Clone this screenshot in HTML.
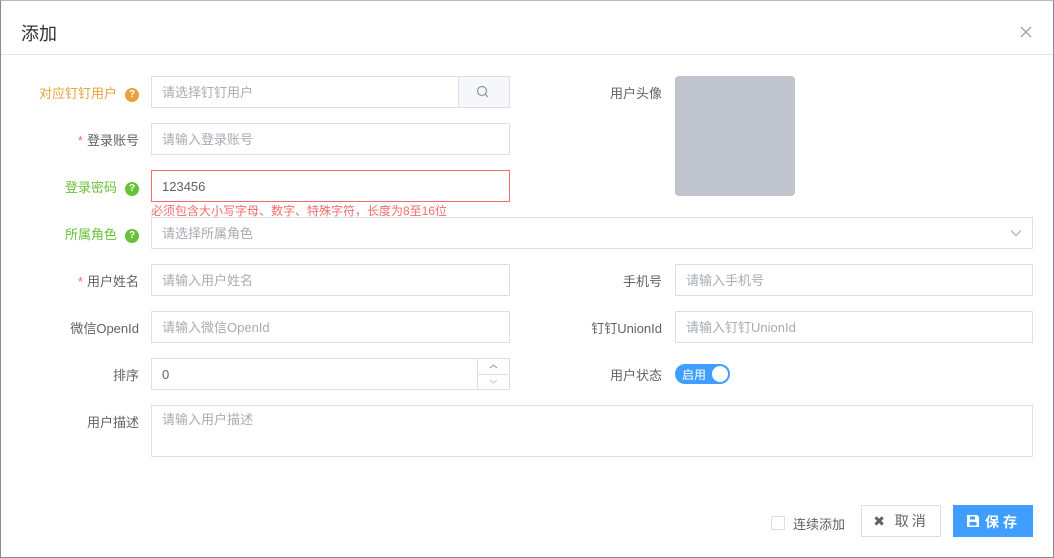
<!DOCTYPE html>
<html><head><meta charset="utf-8"><style>
*{box-sizing:border-box;margin:0;padding:0}
body{width:1054px;height:558px;background:#fff;font-family:"Liberation Sans","Noto Sans CJK SC",sans-serif;font-size:13px;color:#606266;position:relative;overflow:hidden}
.frame{position:absolute;left:0;top:0;width:1054px;height:558px;border:1px solid #8a8a8a;border-top:1px solid #bbb}
.hd{position:absolute;left:1px;top:1px;right:1px;height:54px;border-bottom:1px solid #e4e6eb}
.hd span{position:absolute;left:20px;top:19px;font-size:18px;color:#303133}
.lbl{position:absolute;text-align:right;white-space:nowrap;font-size:13px;color:#606266}
.in{position:absolute;height:32px;border:1px solid #dcdfe6;background:#fff;padding-left:10px;line-height:31px;color:#a8abb2;font-size:13px}
.q{display:inline-block;width:14px;height:14px;border-radius:50%;color:#fff;font-size:10px;line-height:14px;text-align:center;font-weight:bold;margin-left:8px;vertical-align:1px}
.star{color:#f56c6c;margin-right:4px}
</style></head><body>
<div class="frame"></div>
<div class="hd"><span>添加</span></div>
<svg width="12" height="12" style="position:absolute;left:1020px;top:26px" viewBox="0 0 12 12"><path d="M1 1L11 11M11 1L1 11" stroke="#909399" stroke-width="1.2"/></svg>

<div class="lbl" style="right:915px;top:83px;color:#e6a23c">对应钉钉用户<span class="q" style="background:#e6a23c">?</span></div>
<div class="in" style="left:151px;top:76px;width:359px">请选择钉钉用户</div>
<div style="position:absolute;left:458px;top:76px;width:52px;height:32px;background:#f5f7fa;border:1px solid #dcdfe6"><svg width="14" height="14" style="position:absolute;left:17px;top:8px" viewBox="0 0 14 14"><circle cx="6" cy="6" r="4.5" fill="none" stroke="#909399" stroke-width="1.2"/><line x1="9.3" y1="9.3" x2="12" y2="12" stroke="#909399" stroke-width="1.2"/></svg></div>

<div class="lbl" style="right:915px;top:130px"><span class="star">*</span>登录账号</div>
<div class="in" style="left:151px;top:123px;width:359px">请输入登录账号</div>

<div class="lbl" style="right:915px;top:177px;color:#67c23a">登录密码<span class="q" style="background:#67c23a">?</span></div>
<div class="in" style="left:151px;top:170px;width:359px;border-color:#f56c6c;color:#606266">123456</div>
<div style="position:absolute;left:151px;top:202px;font-size:12px;color:#f56c6c">必须包含大小写字母、数字、特殊字符，长度为8至16位</div>

<div class="lbl" style="right:915px;top:224px;color:#67c23a">所属角色<span class="q" style="background:#67c23a">?</span></div>
<div class="in" style="left:151px;top:217px;width:882px">请选择所属角色</div>
<svg width="12" height="8" style="position:absolute;left:1010px;top:229px" viewBox="0 0 12 8"><path d="M1 1.5l5 5 5-5" fill="none" stroke="#a8abb2" stroke-width="1.2"/></svg>

<div class="lbl" style="right:915px;top:271px"><span class="star">*</span>用户姓名</div>
<div class="in" style="left:151px;top:264px;width:359px">请输入用户姓名</div>
<div class="lbl" style="right:915px;top:318px">微信OpenId</div>
<div class="in" style="left:151px;top:311px;width:359px">请输入微信OpenId</div>
<div class="lbl" style="right:915px;top:365px">排序</div>
<div class="in" style="left:151px;top:358px;width:359px;color:#606266">0</div>
<div style="position:absolute;left:477px;top:358px;width:33px;height:32px;border:1px solid #dcdfe6;background:#fff"><svg width="31" height="30" viewBox="0 0 31 30" style="position:absolute;left:0;top:0"><line x1="0" y1="15.5" x2="31" y2="15.5" stroke="#dcdfe6"/><path d="M12 9l3.5-3 3.5 3" fill="none" stroke="#909399"/><path d="M12 21l3.5 3 3.5-3" fill="none" stroke="#c0c4cc"/></svg></div>
<div class="lbl" style="right:915px;top:412px">用户描述</div>
<div class="in" style="left:151px;top:405px;width:882px;height:52px;line-height:28px">请输入用户描述</div>

<div class="lbl" style="right:392px;top:83px">用户头像</div>
<div style="position:absolute;left:675px;top:76px;width:120px;height:120px;background:#c0c4cc;border-radius:4px"></div>
<div class="lbl" style="right:392px;top:271px">手机号</div>
<div class="in" style="left:675px;top:264px;width:358px">请输入手机号</div>
<div class="lbl" style="right:392px;top:318px">钉钉UnionId</div>
<div class="in" style="left:675px;top:311px;width:358px">请输入钉钉UnionId</div>
<div class="lbl" style="right:392px;top:365px">用户状态</div>
<div style="position:absolute;left:675px;top:364px;width:55px;height:20px;border-radius:10px;background:#409eff"><span style="position:absolute;left:7px;top:2px;font-size:12px;color:#fff">启用</span><span style="position:absolute;right:2px;top:2px;width:16px;height:16px;border-radius:50%;background:#fff"></span></div>

<div style="position:absolute;left:771px;top:516px;width:14px;height:14px;border:1px solid #dcdfe6"></div>
<div style="position:absolute;left:793px;top:514px;font-size:13px;color:#606266">连续添加</div>
<div style="position:absolute;left:861px;top:505px;width:80px;height:32px;border:1px solid #dcdfe6;text-align:center;line-height:30px;color:#606266;letter-spacing:3px;font-size:14px">✖ 取消</div>
<div style="position:absolute;left:953px;top:505px;width:80px;height:32px;background:#409eff;color:#fff;font-size:14px"><svg width="12" height="12" viewBox="0 0 12 12" style="position:absolute;left:14px;top:10px"><path d="M0 0H10L12 2V12H0Z" fill="#fff"/><rect x="3" y="1.5" width="5" height="3" fill="#409eff"/><rect x="2.5" y="7" width="7" height="3.5" fill="#409eff"/></svg><span style="position:absolute;left:32px;top:7px;letter-spacing:4px;font-weight:bold">保存</span></div>
</body></html>
